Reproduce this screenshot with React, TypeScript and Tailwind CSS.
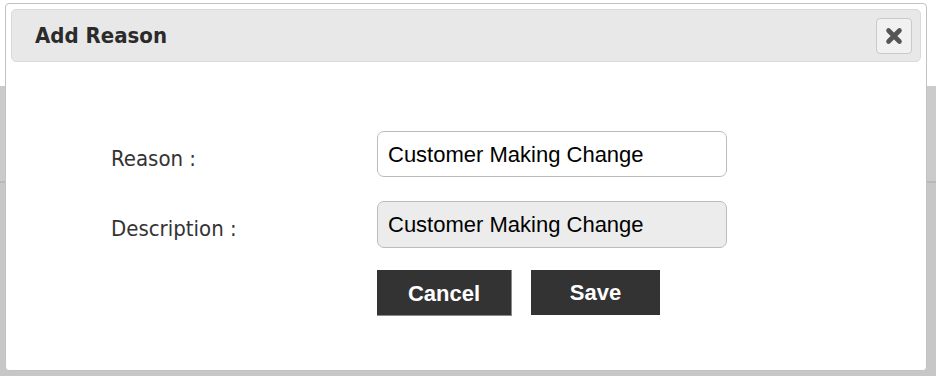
import React from "react";

const tahoma = { fontFamily: "'DejaVu Sans Condensed', 'DejaVu Sans', sans-serif", fontStretch: "condensed" as const };
const arial = { fontFamily: "'Liberation Sans', Arial, sans-serif" };

function CloseIcon() {
  return (
    <svg width="18" height="18" viewBox="0 0 18 18" aria-hidden="true">
      <path d="M3.5 3.5 L14.5 14.5 M14.5 3.5 L3.5 14.5" stroke="#555" strokeWidth="4.6" strokeLinecap="round" fill="none" />
    </svg>
  );
}

export default function App() {
  return (
    <div className="relative w-[936px] h-[376px] overflow-hidden bg-[#c7c7c7]">
      {/* backdrop page */}
      <div className="flex flex-col h-full">
        <div className="h-[86px] bg-white" />
        <div className="h-[95px] bg-[#cbcbcb]" />
        <div className="h-[2px] bg-[#b9b9b9]" />
        <div className="flex-1 bg-[#c7c7c7]" />
      </div>

      {/* modal */}
      <div className="absolute left-[5px] top-[3px] w-[922px] h-[368px] bg-white border border-[#c2c2c2] rounded-[4px] p-[5px] flex flex-col">
        <div className="h-[53px] bg-[#e8e8e8] border border-[#dadada] rounded-[5px] flex items-center justify-between pl-[23px] pr-[8px]">
          <h2 className="text-[22px] font-bold text-[#2b2b2b] leading-none" style={tahoma}>
            Add Reason
          </h2>
          <button className="w-[36px] h-[36px] bg-[#f1f1f1] border border-[#c9c9c9] rounded-[4px] flex items-center justify-center">
            <CloseIcon />
          </button>
        </div>

        <div className="pl-[100px] pt-[69px] flex flex-col">
          <div className="flex items-center h-[46px]">
            <label className="w-[266px] text-[22px] text-[#333] pt-[8px]" style={tahoma}>
              Reason :
            </label>
            <div className="w-[350px] h-[46px] border border-[#bcbcbc] rounded-[7px] bg-white flex items-center pl-[10px] text-[22px] text-black" style={arial}>
              Customer Making Change
            </div>
          </div>
          <div className="flex items-center h-[47px] mt-[24px]">
            <label className="w-[266px] text-[22px] text-[#333] pt-[8px]" style={tahoma}>
              Description :
            </label>
            <div className="w-[350px] h-[47px] border border-[#bcbcbc] rounded-[7px] bg-[#ececec] flex items-center pl-[10px] text-[22px] text-black" style={arial}>
              Customer Making Change
            </div>
          </div>
          <div className="flex items-start gap-[19px] mt-[22px] ml-[266px]">
            <button className="w-[135px] h-[46px] bg-[#333333] border-r border-b border-[#8a8a8a] text-white font-bold text-[22px] flex items-center justify-center pt-[2px]" style={arial}>
              Cancel
            </button>
            <button className="w-[129px] h-[45px] bg-[#333333] text-white font-bold text-[22px] flex items-center justify-center" style={arial}>
              Save
            </button>
          </div>
        </div>
      </div>
    </div>
  );
}
